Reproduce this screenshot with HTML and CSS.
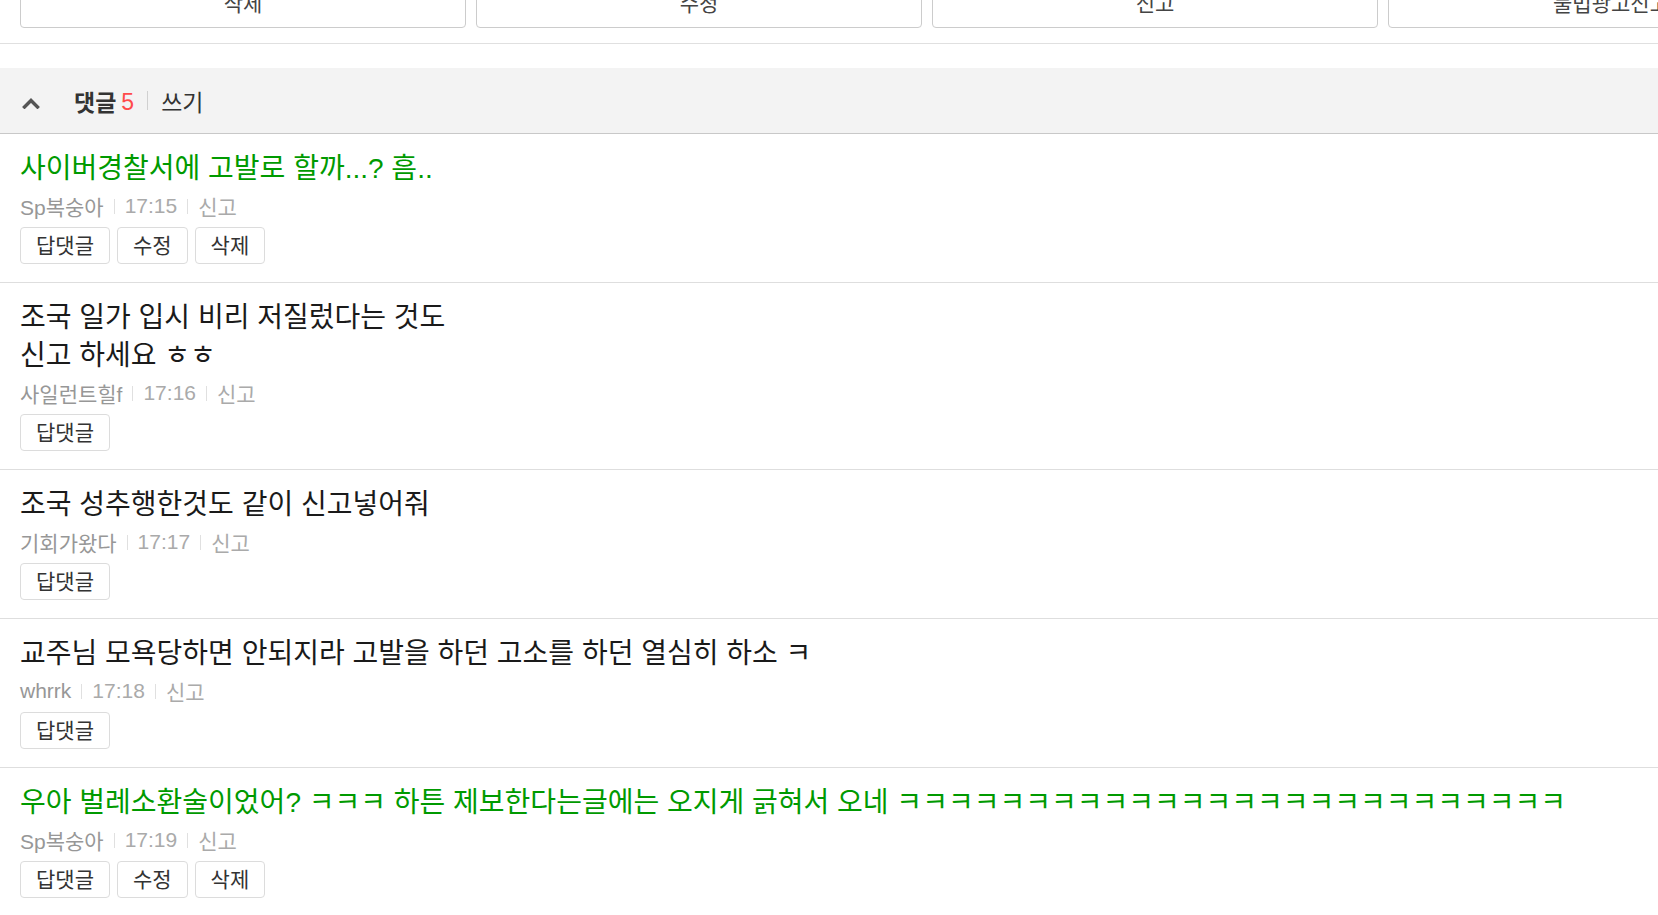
FILE: index.html
```html
<!DOCTYPE html>
<html lang="ko">
<head>
<meta charset="utf-8">
<title>댓글</title>
<link rel="stylesheet" href="styles.css">
</head>
<body>
<div class="top-actions">
  <button class="top-btn">삭제</button>
  <button class="top-btn">수정</button>
  <button class="top-btn">신고</button>
  <button class="top-btn">불법광고신고</button>
</div>

<div class="cmt-head">
  <svg class="chev" width="18" height="12" viewBox="0 0 18 12"><path d="M2.5 10 L9 3.5 L15.5 10" fill="none" stroke="#555" stroke-width="3.4" stroke-linecap="square"/></svg>
  <span class="head-title">댓글</span><span class="head-count">5</span><span class="head-sep"></span><span class="head-write">쓰기</span>
</div>

<ul class="cmt-list">
  <li class="cmt">
    <p class="cmt-text mine">사이버경찰서에 고발로 할까...? 흠..</p>
    <div class="meta"><span class="nick">Sp복숭아</span><span class="sep"></span><span class="time">17:15</span><span class="sep"></span><span class="report">신고</span></div>
    <div class="actions"><button class="btn">답댓글</button><button class="btn">수정</button><button class="btn">삭제</button></div>
  </li>
  <li class="cmt">
    <p class="cmt-text">조국 일가 입시 비리 저질렀다는 것도<br>신고 하세요 ㅎㅎ</p>
    <div class="meta"><span class="nick">사일런트힐f</span><span class="sep"></span><span class="time">17:16</span><span class="sep"></span><span class="report">신고</span></div>
    <div class="actions"><button class="btn">답댓글</button></div>
  </li>
  <li class="cmt">
    <p class="cmt-text">조국 성추행한것도 같이 신고넣어줘</p>
    <div class="meta"><span class="nick">기회가왔다</span><span class="sep"></span><span class="time">17:17</span><span class="sep"></span><span class="report">신고</span></div>
    <div class="actions"><button class="btn">답댓글</button></div>
  </li>
  <li class="cmt">
    <p class="cmt-text">교주님 모욕당하면 안되지라 고발을 하던 고소를 하던 열심히 하소 ㅋ</p>
    <div class="meta"><span class="nick">whrrk</span><span class="sep"></span><span class="time">17:18</span><span class="sep"></span><span class="report">신고</span></div>
    <div class="actions"><button class="btn">답댓글</button></div>
  </li>
  <li class="cmt">
    <p class="cmt-text mine">우아 벌레소환술이었어? ㅋㅋㅋ 하튼 제보한다는글에는 오지게 긁혀서 오네 ㅋㅋㅋㅋㅋㅋㅋㅋㅋㅋㅋㅋㅋㅋㅋㅋㅋㅋㅋㅋㅋㅋㅋㅋㅋㅋ</p>
    <div class="meta"><span class="nick">Sp복숭아</span><span class="sep"></span><span class="time">17:19</span><span class="sep"></span><span class="report">신고</span></div>
    <div class="actions"><button class="btn">답댓글</button><button class="btn">수정</button><button class="btn">삭제</button></div>
  </li>
</ul>
</body>
</html>
```
FILE: styles.css
```css
html, body {
  margin: 0;
  padding: 0;
  background: #fff;
}
body {
  font-family: "Liberation Sans", "Noto Sans CJK KR", sans-serif;
  color: #222;
  overflow: hidden;
}
button {
  font-family: inherit;
  background: #fff;
  cursor: pointer;
}

.top-actions {
  display: flex;
  gap: 10px;
  padding: 0 20px 15px;
  border-bottom: 1px solid #e0e0e0;
  overflow: hidden;
}
.top-btn {
  flex: 0 0 446px;
  height: 48px;
  margin-top: -20px;
  border: 1px solid #ccc;
  border-radius: 4px;
  font-size: 21px;
  color: #444;
  line-height: 46px;
  padding: 0;
}

.cmt-head {
  margin-top: 24px;
  height: 65px;
  background: #f3f3f3;
  border-bottom: 1px solid #c8c8c8;
  display: flex;
  align-items: center;
  padding-left: 22px;
  font-size: 23px;
}
.chev {
  margin-right: 34px;
  margin-top: 5px;
}
.head-title {
  font-weight: bold;
  color: #333;
}
.head-count {
  color: #ff4b4b;
  margin-left: 5px;
  margin-top: 3px;
}
.head-sep {
  width: 1px;
  height: 19px;
  background: #d0d0d0;
  margin: 0 13px;
}
.head-write {
  color: #333;
}

.cmt-list {
  list-style: none;
  margin: 0;
  padding: 0;
}
.cmt {
  padding: 16px 20px 18px;
  border-bottom: 1px solid #dedede;
}
.cmt-text {
  margin: 0;
  font-size: 28px;
  line-height: 38px;
  color: #1a1a1a;
  white-space: nowrap;
}
.cmt-text.mine {
  color: #009a00;
}
.meta {
  margin-top: 3px;
  height: 30px;
  display: flex;
  align-items: center;
  font-size: 21px;
  color: #aaa;
}
.nick {
  color: #979797;
}
.sep {
  width: 1px;
  height: 15px;
  background: #e0e0e0;
  margin: 0 10px;
}
.actions {
  margin-top: 6px;
  display: flex;
  gap: 7px;
}
.btn {
  height: 37px;
  padding: 0 15px;
  border: 1px solid #dcdcdc;
  border-radius: 4px;
  font-size: 21px;
  line-height: 35px;
  color: #333;
}
```
